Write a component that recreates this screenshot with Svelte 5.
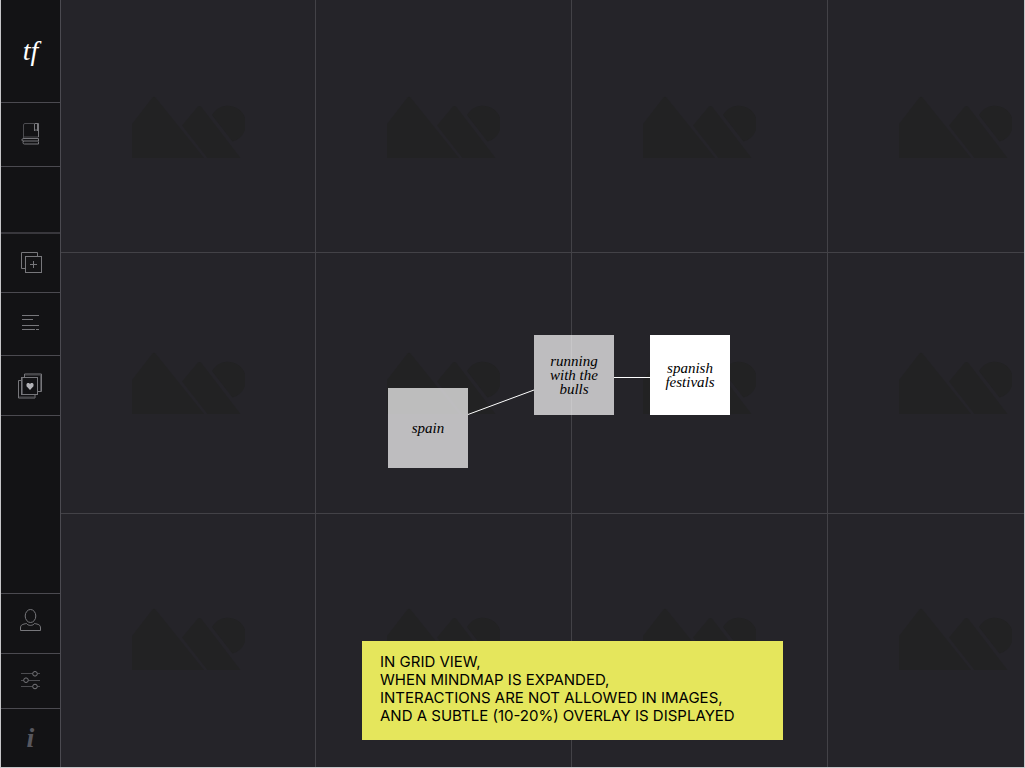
<script>
  const cells = Array.from({ length: 12 }, (_, i) => i);

  const nodes = [
    { lines: ['spain'], x: 327, y: 388, active: false },
    { lines: ['running', 'with the', 'bulls'], x: 473, y: 335, active: false },
    { lines: ['spanish', 'festivals'], x: 589, y: 335, active: true }
  ];

  const noteLines = [
    'IN GRID VIEW,',
    'WHEN MINDMAP IS EXPANDED,',
    'INTERACTIONS ARE NOT ALLOWED IN IMAGES,',
    'AND A SUBTLE (10-20%) OVERLAY IS DISPLAYED'
  ];
</script>

<div class="page">
  <nav class="sidebar" aria-label="Main">
    <a class="item logo" href="#home">tf</a>
    <button class="item book" aria-label="Library">
      <svg width="19" height="23" viewBox="0 0 19 23">
        <path class="dim" d="M2.500 16V2Q2.500.5 4 .5H13.500M2.500 14H17.500" />
        <path d="M13.500.5V8L15 6.500L16.500 8V.5M14 .5H17.500V14" />
        <path d="M17.500 15.500H3Q.8 15.500.8 17Q.8 18 2.500 18H17.500V15.500M3 18Q2 18 2 19.500Q2 21 3.500 21H17.500V18.500" />
      </svg>
    </button>
    <div class="item gap"></div>
    <button class="item add" aria-label="Add to collection">
      <svg width="23" height="22" viewBox="0 0 23 22">
        <path d="M6.500 16.500H2.500V.5H18.500V4.500" />
        <rect x="6.500" y="4.500" width="16" height="16" />
        <path d="M14.500 9V16M11 12.500H18" />
      </svg>
    </button>
    <button class="item list" aria-label="List">
      <svg width="19" height="18" viewBox="0 0 19 18">
        <path d="M1 .5H18M1 4.500H12M1 10.500H18M1 14.500H14M15 14.500H18" />
      </svg>
    </button>
    <button class="item likes" aria-label="Favourites">
      <svg width="25" height="27" viewBox="0 0 25 27">
        <path d="M6.500 5V2H23.500V19.500H20M3.500 8.500H.5V26H17V23" />
        <path class="dim" d="M7 3H23M22.500 2V19M1 25H17M4.500 6V22" />
        <rect x="3.500" y="5.500" width="16" height="17" />
        <path class="heart" d="M12 18L8.500 14.200V12L9.500 11H11L12 12L13 11H14.500L15.500 12V14.200Z" />
      </svg>
    </button>
    <div class="item rest"></div>
    <button class="item user" aria-label="Profile">
      <svg width="23" height="29" viewBox="0 0 23 29">
        <ellipse cx="11.500" cy="7" rx="5.300" ry="6.500" />
        <path d="M7.500 14.500C4 15.300 1.500 15.500 1.500 19V21.500H21.500V19C21.500 15.500 19 15.300 15.500 14.500C14 17 9 17 7.500 14.500Z" />
      </svg>
    </button>
    <button class="item tune" aria-label="Settings">
      <svg width="21" height="20" viewBox="0 0 21 20">
        <path class="dim" d="M1 2.500H12.500M17.500 2.500H20M1 9.500H3.500M8.500 9.500H20M1 15.500H12.500M17.500 15.500H20" />
        <circle cx="15" cy="2.800" r="2.300" />
        <circle cx="6" cy="9.200" r="2.300" />
        <circle cx="15" cy="15.500" r="2.300" />
      </svg>
    </button>
    <a class="item info" href="#info" aria-label="Information">i</a>
  </nav>

  <main class="canvas">
    <div class="grid">
      {#each cells as cell (cell)}
        <div class="cell">
          <svg width="113" height="62" viewBox="0 0 113 62" aria-hidden="true">
            <path d="M0 28L20.500 1.500Q22 0 23.500 1.500L72 62H0Z" />
            <path d="M50 29.500L66 10.500Q67.500 9.500 69 10.500L108.500 62H75.500Z" />
            <path d="M80 19A18.200 18.200 0 1 1 100.500 45.500Z" />
          </svg>
        </div>
      {/each}
    </div>

    <svg class="links" width="700" height="480" aria-hidden="true">
      <path d="M407 414.500L473 390M553 377.500H589" />
    </svg>

    {#each nodes as node (node.x)}
      <button class="node" class:active={node.active} style="left: {node.x}px; top: {node.y}px">
        {#each node.lines as line (line)}
          <span>{line}</span>
        {/each}
      </button>
    {/each}

    <p class="note">
      {#each noteLines as line (line)}
        <span>{line}</span>
      {/each}
    </p>
  </main>
</div>

<style>
  :global(body) {
    margin: 0;
    background: #252429;
  }

  .page {
    box-sizing: border-box;
    display: flex;
    min-height: 100vh;
    border: solid #c6c6c9;
    border-width: 0 1px 1px;
    background: #252429;
  }

  .sidebar {
    box-sizing: border-box;
    display: flex;
    flex: none;
    flex-direction: column;
    width: 60px;
    border-right: 1px solid #4b4a50;
    background: #131315;
  }

  .item {
    box-sizing: border-box;
    display: flex;
    flex: none;
    align-items: center;
    justify-content: center;
    width: 100%;
    height: 60px;
    margin: 0;
    padding: 0;
    border: 0;
    border-bottom: 1px solid #4b4a50;
    background: none;
    text-decoration: none;
  }

  .item svg {
    fill: none;
    stroke: #77777b;
    stroke-width: 1;
  }

  .item .dim {
    stroke: #4c4c50;
  }

  .item .heart {
    fill: #b4b4b8;
    stroke: none;
  }

  .logo {
    height: 103px;
    color: #fff;
    font: italic 28px "Liberation Serif", serif;
  }

  .book {
    height: 64px;
  }

  .gap {
    height: 67px;
    border-bottom: 2px solid #38373c;
  }

  .add {
    height: 59px;
  }

  .list {
    height: 63px;
  }

  .rest {
    flex: 1 0 60px;
  }

  .tune {
    height: 55px;
  }

  .info {
    height: 58px;
    border-bottom: 0;
    color: #57575e;
    font: italic bold 28px "Liberation Serif", serif;
  }

  .canvas {
    position: relative;
    flex: 1;
    min-width: 0;
    overflow: hidden;
  }

  .grid {
    display: grid;
    grid-template-rows: 253fr 261fr 253fr;
    grid-template-columns: 255px repeat(3, minmax(256px, 1fr));
    height: 100%;
  }

  .cell {
    display: flex;
    align-items: center;
    justify-content: center;
    border: solid #434247;
    border-width: 0 1px 1px 0;
  }

  .cell:nth-child(-n + 4) {
    padding-top: 2px;
  }

  .cell:nth-last-child(-n + 4) {
    padding-bottom: 4px;
    border-bottom: 0;
  }

  .cell svg {
    fill: #222223;
  }

  .links {
    position: absolute;
    top: 0;
    left: 0;
    fill: none;
    stroke: #fff;
  }

  .node {
    position: absolute;
    display: flex;
    flex-direction: column;
    align-items: center;
    justify-content: center;
    width: 80px;
    height: 80px;
    padding: 0;
    border: 0;
    background: rgba(255, 255, 255, 0.7);
    color: #000;
    font: italic 15px/14px "Liberation Serif", serif;
  }

  .node.active {
    background: #fff;
  }

  .note {
    position: absolute;
    bottom: 27px;
    left: 301px;
    box-sizing: border-box;
    width: 421px;
    margin: 0;
    padding: 12px 0 15px 18px;
    background: #e5e65c;
    color: #000;
    font: 15px/18px Inter, sans-serif;
    white-space: nowrap;
  }

  .note span {
    display: block;
  }
</style>
